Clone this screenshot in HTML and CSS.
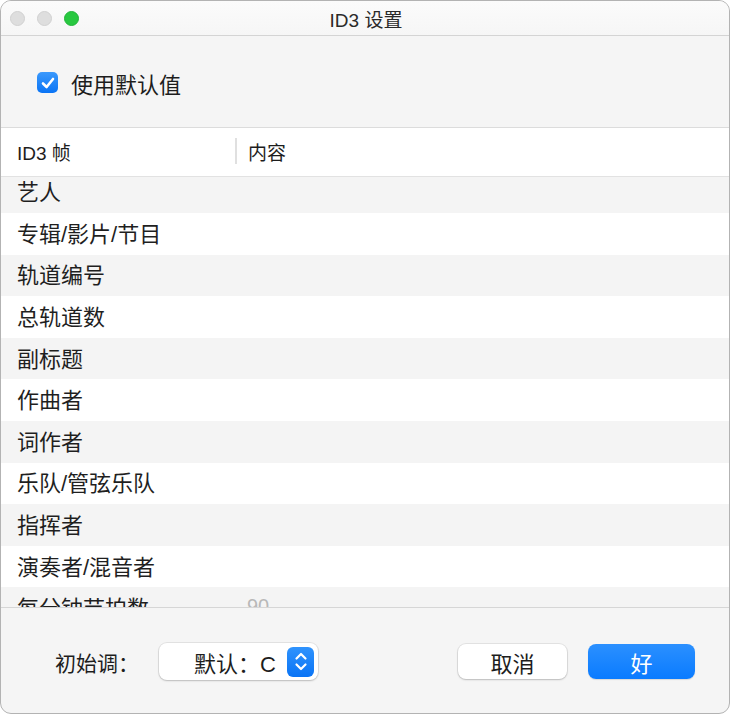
FILE: index.html
```html
<!DOCTYPE html>
<html lang="zh">
<head>
<meta charset="utf-8">
<title>ID3 设置</title>
<link rel="stylesheet" href="styles.css">
</head>
<body>
<div class="window">
  <div class="titlebar">
    <div class="lights">
      <span class="light gray"></span>
      <span class="light gray"></span>
      <span class="light green"></span>
    </div>
    <div class="title">ID3 设置</div>
  </div>
  <div class="top">
    <label class="check">
      <span class="box"><svg viewBox="0 0 20 20" width="20" height="20"><path d="M5 10.5 L8.6 14 L15 6" fill="none" stroke="#fff" stroke-width="2.6" stroke-linecap="round" stroke-linejoin="round"/></svg></span>
      <span class="check-label">使用默认值</span>
    </label>
  </div>
  <div class="table">
    <div class="thead">
      <div class="th c1">ID3 帧</div>
      <div class="th c2"><span class="sep"></span>内容</div>
    </div>
    <div class="tbody">
      <div class="rows">
        <div class="row alt"><span class="c1">艺人</span><span class="c2"></span></div>
        <div class="row"><span class="c1">专辑/影片/节目</span><span class="c2"></span></div>
        <div class="row alt"><span class="c1">轨道编号</span><span class="c2"></span></div>
        <div class="row"><span class="c1">总轨道数</span><span class="c2"></span></div>
        <div class="row alt"><span class="c1">副标题</span><span class="c2"></span></div>
        <div class="row"><span class="c1">作曲者</span><span class="c2"></span></div>
        <div class="row alt"><span class="c1">词作者</span><span class="c2"></span></div>
        <div class="row"><span class="c1">乐队/管弦乐队</span><span class="c2"></span></div>
        <div class="row alt"><span class="c1">指挥者</span><span class="c2"></span></div>
        <div class="row"><span class="c1">演奏者/混音者</span><span class="c2"></span></div>
        <div class="row alt"><span class="c1">每分钟节拍数</span><span class="c2 muted">90</span></div>
      </div>
    </div>
  </div>
  <div class="footer">
    <span class="key-label">初始调：</span>
    <div class="popup">
      <span class="popup-text">默认：C</span>
      <span class="stepper"><svg viewBox="0 0 26 29" width="26" height="29"><path d="M8.5 11.5 L13 7 L17.5 11.5 M8.5 17.5 L13 22 L17.5 17.5" fill="none" stroke="#fff" stroke-width="2.2" stroke-linecap="round" stroke-linejoin="round"/></svg></span>
    </div>
    <div class="spacer"></div>
    <button class="btn cancel">取消</button>
    <button class="btn ok">好</button>
  </div>
</div>
</body>
</html>
```

FILE: styles.css
```css
* { box-sizing: border-box; }
html, body { margin: 0; padding: 0; background: #ffffff; }
body {
  font-family: "Liberation Sans", "Noto Sans CJK SC", sans-serif;
  color: #1d1d1d;
}
.window {
  width: 730px;
  height: 714px;
  border: 1px solid #b3b3b3;
  border-radius: 11px;
  overflow: hidden;
  background: #f5f5f5;
  display: flex;
  flex-direction: column;
}
.titlebar {
  height: 35px;
  flex: none;
  background: linear-gradient(#fbfbfb, #f6f6f6);
  border-bottom: 1px solid #d4d4d4;
  display: flex;
  align-items: center;
  justify-content: center;
  position: relative;
}
.lights {
  position: absolute;
  left: 9px;
  top: 10px;
  display: flex;
  gap: 12px;
}
.light {
  width: 15px;
  height: 15px;
  border-radius: 50%;
  display: block;
}
.light.gray { background: #dedede; border: 1px solid #d0d0d0; }
.light.green { background: #28c840; border: 1px solid #22b53a; }
.title {
  font-size: 19px;
  color: #2a2a2a;
  margin-left: 2px;
}
.top {
  height: 91px;
  flex: none;
  display: flex;
  align-items: center;
  padding-left: 36px;
  padding-top: 2px;
}
.check { display: flex; align-items: center; gap: 13px; }
.box {
  width: 21px;
  height: 21px;
  border-radius: 5px;
  background: linear-gradient(#3b99fc, #0a74f5);
  display: flex;
  align-items: center;
  justify-content: center;
}
.box svg { display: block; }
.check-label { font-size: 22px; color: #1d1d1d; }
.table {
  flex: none;
  display: flex;
  flex-direction: column;
  border-top: 1px solid #dcdcdc;
  border-bottom: 1px solid #d6d6d6;
}
.thead {
  height: 49px;
  background: #ffffff;
  border-bottom: 1px solid #e2e2e2;
  display: flex;
  align-items: center;
  font-size: 19px;
  padding-bottom: 2px;
}
.th { display: flex; align-items: center; }
.c1 { width: 232px; padding-left: 16px; flex: none; }
.c2 { flex: 1; display: flex; align-items: center; }
.sep {
  width: 2px;
  height: 26px;
  background: #e0e0e0;
  margin-right: 11px;
  margin-left: 2px;
}
.tbody {
  height: 430px;
  overflow: hidden;
  background: #ffffff;
}
.rows { margin-top: -5.6px; }
.row {
  height: 41.6px;
  display: flex;
  align-items: center;
  font-size: 22px;
  background: #ffffff;
  color: #1f1f1f;
  padding-bottom: 4px;
}
.row.alt { background: #f4f4f4; }
.row .c2 { padding-left: 14px; }
.muted { color: #b8b8b8; font-size: 20px; }
.footer {
  flex: 1;
  display: flex;
  align-items: center;
  padding: 2px 34px 0 54px;
}
.key-label { font-size: 21px; color: #1d1d1d; width: 104px; flex: none; }
.popup {
  width: 159px;
  height: 37px;
  background: #ffffff;
  border-radius: 8px;
  box-shadow: 0 0 0 1px rgba(0,0,0,0.07), 0 1px 2px rgba(0,0,0,0.18);
  display: flex;
  align-items: center;
  justify-content: flex-end;
  padding-right: 4px;
}
.popup-text { font-size: 22px; margin-right: 11px; }
.stepper {
  width: 27px;
  height: 30px;
  border-radius: 6px;
  background: linear-gradient(#2f93fd, #0a74f5);
  display: flex;
  align-items: center;
  justify-content: center;
}
.stepper svg { display: block; }
.spacer { flex: 1; }
.btn {
  height: 35px;
  border: none;
  border-radius: 8px;
  font-family: inherit;
  font-size: 22px;
  padding: 0;
}
.cancel {
  width: 109px;
  background: #ffffff;
  color: #1d1d1d;
  box-shadow: 0 0 0 1px rgba(0,0,0,0.07), 0 1px 2px rgba(0,0,0,0.18);
  margin-right: 21px;
}
.ok {
  width: 107px;
  background: linear-gradient(#2b90ff, #0a7bff);
  color: #ffffff;
  box-shadow: 0 1px 1px rgba(0,0,0,0.12);
}
```
